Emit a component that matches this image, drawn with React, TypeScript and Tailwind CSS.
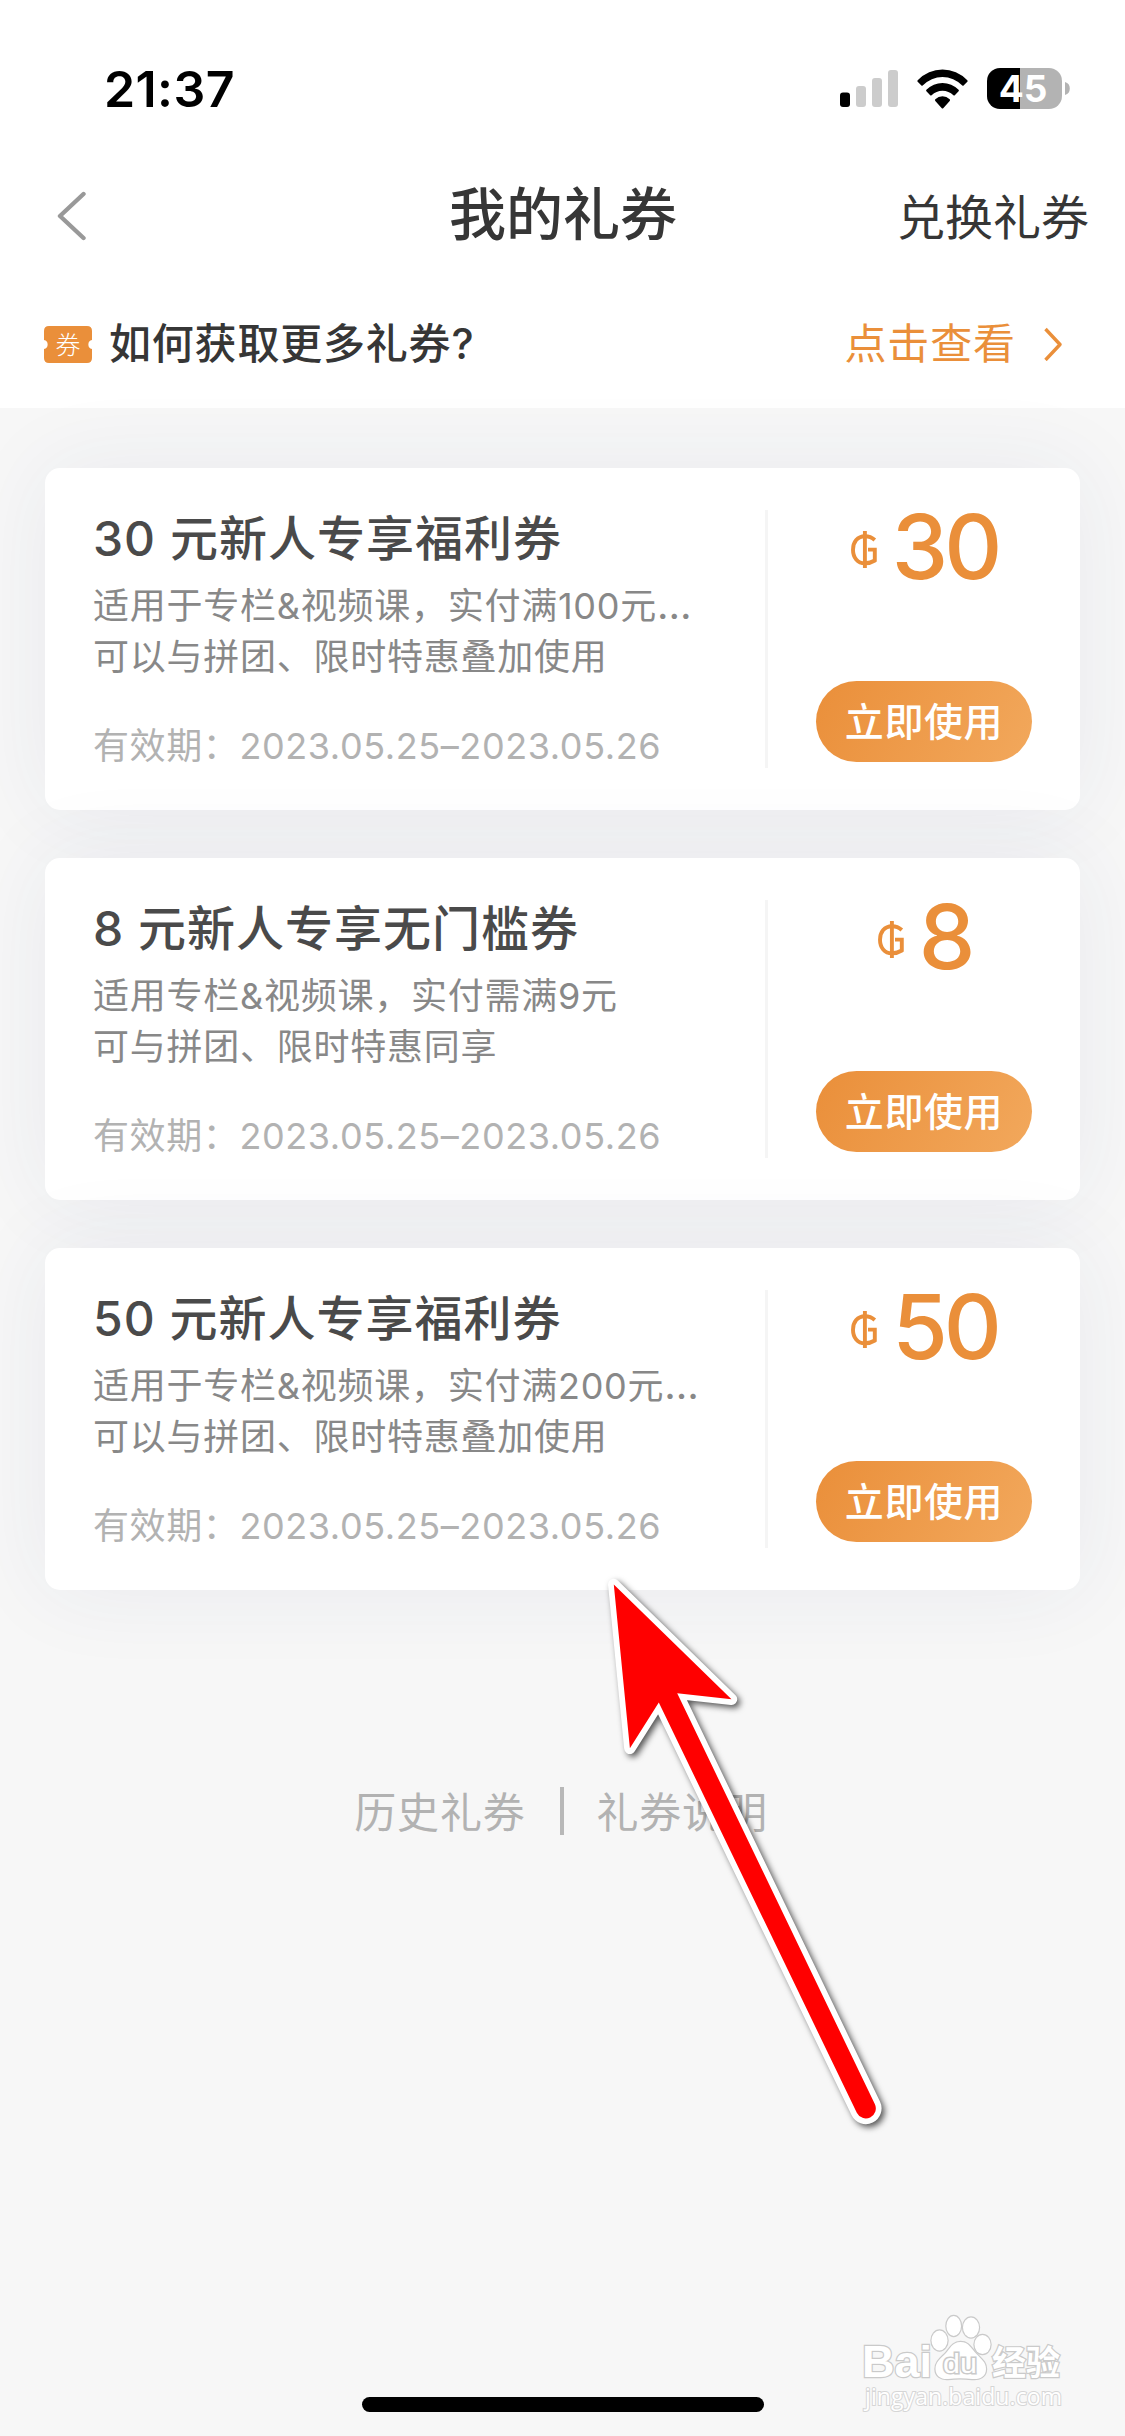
const FONT = "font-['Inter','Noto_Sans_CJK_SC',sans-serif]";

type Coupon = {
  amount: string;
  title: string;
  lines: [string, string];
  truncated: boolean;
  period: string;
};

const coupons: Coupon[] = [
  {
    amount: "30",
    title: "30 元新人专享福利券",
    lines: ["适用于专栏&视频课，实付满100元", "可以与拼团、限时特惠叠加使用"],
    truncated: true,
    period: "2023.05.25–2023.05.26",
  },
  {
    amount: "8",
    title: "8 元新人专享无门槛券",
    lines: ["适用专栏&视频课，实付需满9元", "可与拼团、限时特惠同享"],
    truncated: false,
    period: "2023.05.25–2023.05.26",
  },
  {
    amount: "50",
    title: "50 元新人专享福利券",
    lines: ["适用于专栏&视频课，实付满200元", "可以与拼团、限时特惠叠加使用"],
    truncated: true,
    period: "2023.05.25–2023.05.26",
  },
];

function SignalIcon() {
  return (
    <svg width="58" height="37" viewBox="0 0 58 37">
      <rect x="0" y="22.5" width="10" height="14.5" rx="3" fill="#000" />
      <rect x="16" y="16" width="10" height="21" rx="3" fill="#ccc" />
      <rect x="32" y="8" width="10" height="29" rx="3" fill="#ccc" />
      <rect x="48" y="0" width="10" height="37" rx="3" fill="#ccc" />
    </svg>
  );
}

function WifiIcon() {
  return (
    <svg width="51" height="40" viewBox="0 0 51 37" preserveAspectRatio="none">
      <path d="M0.7 10.3 A36 36 0 0 1 50.3 10.3 Q51 11 50.3 11.7 L46.6 15.3 Q46 15.8 45.3 15.2 A29 29 0 0 0 5.7 15.2 Q5 15.8 4.4 15.3 L0.7 11.7 Q0 11 0.7 10.3 Z" />
      <path d="M9.4 19.2 A23.6 23.6 0 0 1 41.6 19.2 Q42.3 19.9 41.6 20.6 L37.8 24.3 Q37.1 24.9 36.4 24.3 A16.2 16.2 0 0 0 14.6 24.3 Q13.9 24.9 13.2 24.3 L9.4 20.6 Q8.7 19.9 9.4 19.2 Z" />
      <path d="M18.3 28 A11 11 0 0 1 32.7 28 Q33.4 28.8 32.7 29.5 L26.2 36.3 Q25.5 37 24.8 36.3 L18.3 29.5 Q17.6 28.8 18.3 28 Z" />
    </svg>
  );
}

function StatusBar() {
  return (
    <div className="flex h-[151px] items-start pl-[104px] pr-[55px] pt-[59px]">
      <span className="text-[50px] font-semibold leading-[60px] tracking-[0.4px] text-black">21:37</span>
      <div className="ml-auto flex items-center pt-[9px]">
        <SignalIcon />
        <div className="ml-[19px]">
          <WifiIcon />
        </div>
        <div className="ml-[19px] flex h-[41px] w-[75px] items-center justify-center rounded-[13px] bg-[linear-gradient(90deg,#000_0_33.5px,#b3b3b3_33.5px)] pr-[3px] text-[37px] font-bold leading-[41px] text-white">
          45
        </div>
        <svg className="ml-[3px]" width="5" height="13" viewBox="0 0 5 13">
          <path d="M0 0 A6.8 6.8 0 0 1 0 13 Z" fill="#b3b3b3" />
        </svg>
      </div>
    </div>
  );
}

function NavBar() {
  return (
    <div className="grid h-[129px] grid-cols-3 items-center pl-[57px] pr-[36px]">
      <svg width="30" height="50" viewBox="0 0 30 50" fill="none">
        <path d="M26.5 3 L3 25 L26.5 47" stroke="#999" strokeWidth="4.4" strokeLinecap="round" strokeLinejoin="round" />
      </svg>
      <h1 className="mb-[2px] whitespace-nowrap pr-[20px] text-center text-[57px] font-medium leading-[64px] text-[#363636]">我的礼券</h1>
      <span className="whitespace-nowrap pt-[4px] text-right text-[48px] leading-[60px] text-[#363636]">兑换礼券</span>
    </div>
  );
}

function HintRow() {
  return (
    <div className="flex h-[128px] items-center pl-[44px] pr-[62px]">
      <svg width="48" height="37" viewBox="0 0 48 37">
        <path
          d="M5 0 H43 Q48 0 48 5 V14 A4.6 4.6 0 0 0 48 23 V32 Q48 37 43 37 H5 Q0 37 0 32 V23 A4.6 4.6 0 0 0 0 14 V5 Q0 0 5 0 Z"
          fill="#ea8f3a"
        />
        <text x="24" y="27.5" textAnchor="middle" fontSize="25" fill="#fff" fontFamily="'Noto Sans CJK SC', sans-serif" fontWeight="300">
          券
        </text>
      </svg>
      <span className="ml-[17px] text-[42px] font-medium leading-[50px] tracking-[0.8px] text-[#363636]">如何获取更多礼券?</span>
      <span className="ml-auto text-[42px] leading-[50px] tracking-[0.9px] text-[#ea8f3a]">点击查看</span>
      <svg className="ml-[27px]" width="20" height="34" viewBox="0 0 20 34" fill="none">
        <path d="M2.5 2 L17 17.5 L2.5 33" stroke="#ea8f3a" strokeWidth="3.4" strokeLinejoin="round" />
      </svg>
    </div>
  );
}

function CoinIcon() {
  return (
    <svg width="26" height="37" viewBox="0 0 26 37" fill="none" stroke="#ea8f3a">
      <path d="M23.8 9 C20.5 6 17.5 5.2 14 5.2 C6.5 5.2 2 11 2 18.7 C2 26.5 6.5 32.3 14 32.3 C18 32.3 21 31.3 23.8 29.5 V18.6 H17" strokeWidth="3.9" />
      <path d="M13.9 0 V37" strokeWidth="3.9" />
    </svg>
  );
}

function CouponCard({ coupon }: { coupon: Coupon }) {
  return (
    <article className="flex h-[342px] rounded-[15px] bg-white shadow-[0_0_90px_rgba(47,62,120,0.07)]">
      <div className="w-[720px] whitespace-nowrap pl-[48px] pt-[41px]">
        <h2 className="text-[48px] font-medium leading-[60px] tracking-[1px] text-[#4a4a4a]">{coupon.title}</h2>
        <div className="mt-[12px] text-[36px] leading-[51px] tracking-[0.75px] text-[#888]">
          <p>
            {coupon.lines[0]}
            {coupon.truncated && <span className="text-[40px] leading-[40px]">…</span>}
          </p>
          <p>{coupon.lines[1]}</p>
        </div>
        <p className="mt-[38px] text-[36px] leading-[50px] tracking-[0.6px] text-[#b2b2b2]">有效期：{coupon.period}</p>
      </div>
      <div className="my-[42px] w-[3px] bg-[#f5f5f5]" />
      <div className="flex flex-1 flex-col items-center pt-[29px]">
        <div className="flex h-[100px] items-center pl-px">
          <div className="pt-[5px]">
            <CoinIcon />
          </div>
          <span className="ml-[15px] text-[90px] font-medium leading-[100px] tracking-[-4px] text-[#ea8f3a]">{coupon.amount}</span>
        </div>
        <button className="mt-[84px] h-[81px] w-[216px] rounded-full bg-[linear-gradient(118deg,#ea8f3a,#f2a85c)] text-[39px] font-medium leading-[78px] tracking-[0.6px] text-white">
          立即使用
        </button>
      </div>
    </article>
  );
}

/* Red pointer laid over the page */
function PointerArrow() {
  return (
    <svg className="pointer-events-none absolute left-[590px] top-[1560px]" width="320" height="590" viewBox="590 1560 320 590">
      <path
        d="M613.8 1584.5 L731.5 1699.3 L677.2 1693.3 L874.8 2104 A10 10 0 0 1 856.8 2112.8 L658.8 1702.4 L629.9 1748.3 Z"
        fill="#f00"
        stroke="#fff"
        strokeWidth="11.5"
        strokeLinejoin="round"
        paintOrder="stroke"
        className="[filter:drop-shadow(3px_3px_3px_rgba(0,0,0,0.65))]"
      />
    </svg>
  );
}

function Watermark() {
  return (
    <svg
      className="pointer-events-none absolute left-[855px] top-[2305px]"
      width="220"
      height="115"
      viewBox="855 2305 220 115"
      fill="#fff"
      stroke="#cacaca"
      strokeWidth="2.4"
      paintOrder="stroke"
      fontFamily="'Liberation Sans', Arial, sans-serif"
    >
      <text x="862" y="2377" fontSize="45" fontWeight="700" textLength="70" lengthAdjust="spacingAndGlyphs">Bai</text>
      <ellipse cx="939.5" cy="2340.5" rx="8" ry="10" />
      <ellipse cx="953.7" cy="2326" rx="7.3" ry="10" />
      <ellipse cx="971" cy="2327.5" rx="8" ry="10" />
      <ellipse cx="982.5" cy="2344.5" rx="8" ry="9.5" />
      <path d="M960.5 2342 C952 2342 950 2349 945.5 2353.5 C940 2359 935.5 2362 935.5 2369 C935.5 2376 941 2379.5 948 2379 C956 2378 964 2378 972 2379 C980 2379.8 986 2376.5 986 2369 C986 2362 981.5 2359.5 976 2353.5 C971 2348.5 969 2342 960.5 2342 Z" />
      <text x="943" y="2373" fontSize="28" strokeWidth="3" textLength="34" lengthAdjust="spacingAndGlyphs">du</text>
      <text x="992" y="2375" fontSize="34" fontWeight="700" fontFamily="'Noto Sans CJK SC', sans-serif">经验</text>
      <text x="865" y="2405" fontSize="23" fontFamily="'Open Sans', sans-serif" strokeWidth="2" stroke="#d6d6d6" textLength="197">jingyan.baidu.com</text>
    </svg>
  );
}

export default function App() {
  return (
    <div className={`relative flex h-[2436px] w-[1125px] flex-col overflow-hidden bg-[#f7f7f7] ${FONT}`}>
      <header className="h-[408px] bg-white">
        <StatusBar />
        <NavBar />
        <HintRow />
      </header>
      <main className="flex flex-col gap-[48px] px-[45px] pt-[60px]">
        {coupons.map((coupon) => (
          <CouponCard key={coupon.title} coupon={coupon} />
        ))}
      </main>
      <footer className="mt-[188px] flex items-center justify-center pr-[3px] text-[42px] leading-[70px] tracking-[0.8px] text-[#b2b2b2]">
        <span>历史礼券</span>
        <span className="ml-[34px] mr-[33px] mb-[4px] h-[48px] w-[4px] bg-[#b8b8b8]" />
        <span>礼券说明</span>
      </footer>
      <div className="mx-auto mb-[24px] mt-auto h-[15px] w-[402px] rounded-full bg-black" />
      <PointerArrow />
      <Watermark />
    </div>
  );
}
